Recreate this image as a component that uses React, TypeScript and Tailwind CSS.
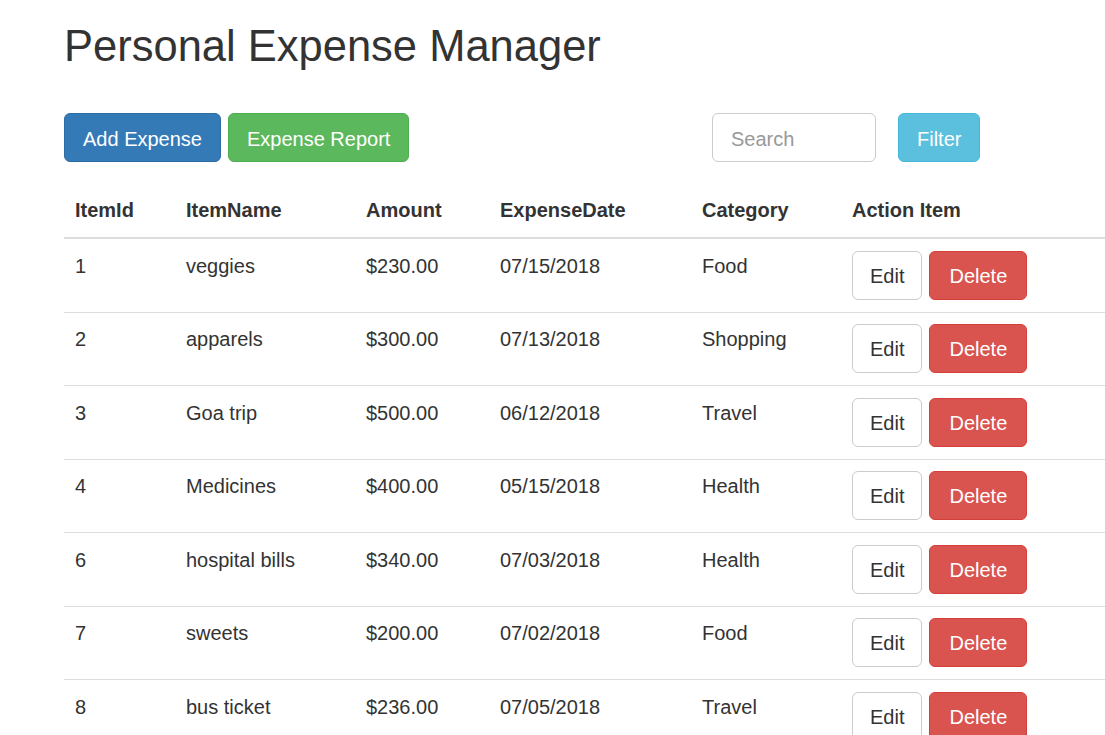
import React from "react";

type Expense = {
  id: number;
  name: string;
  amount: string;
  date: string;
  category: string;
};

const expenses: Expense[] = [
  { id: 1, name: "veggies", amount: "$230.00", date: "07/15/2018", category: "Food" },
  { id: 2, name: "apparels", amount: "$300.00", date: "07/13/2018", category: "Shopping" },
  { id: 3, name: "Goa trip", amount: "$500.00", date: "06/12/2018", category: "Travel" },
  { id: 4, name: "Medicines", amount: "$400.00", date: "05/15/2018", category: "Health" },
  { id: 6, name: "hospital bills", amount: "$340.00", date: "07/03/2018", category: "Health" },
  { id: 7, name: "sweets", amount: "$200.00", date: "07/02/2018", category: "Food" },
  { id: 8, name: "bus ticket", amount: "$236.00", date: "07/05/2018", category: "Travel" },
];

const btn =
  "h-[49px] px-[18px] pt-[3px] rounded-[6px] border text-[20px] leading-[29px] text-white";

const App = () => {
  return (
    <div
      className="w-[1105px] h-[735px] overflow-hidden bg-white text-[#333] pl-[64px]"
      style={{ fontFamily: '"Liberation Sans", Arial, sans-serif' }}
    >
      <h2 className="mt-[23px] text-[43.5px] leading-[47px] font-normal">
        Personal Expense Manager
      </h2>

      <div className="mt-[43px] w-[916px] flex items-center justify-between">
        <div className="flex gap-[7px]">
          <button className={btn + " bg-[#337ab7] border-[#2e6da4]"}>Add Expense</button>
          <button className={btn + " bg-[#5cb85c] border-[#4cae4c]"}>Expense Report</button>
        </div>
        <div className="flex items-center gap-[22px]">
          <input
            type="text"
            placeholder="Search"
            className="w-[164px] h-[49px] px-[18px] pt-[3px] rounded-[6px] border border-[#ccc] text-[20px] placeholder:text-[#999] outline-none"
          />
          <button className={btn + " w-[82px] px-0 bg-[#5bc0de] border-[#46b8da]"}>Filter</button>
        </div>
      </div>

      <table className="mt-[22px] w-full border-collapse text-[20px] leading-[29px]">
        <thead>
          <tr className="border-b-2 border-[#ddd] text-left">
            <th className="w-[111px] px-[11px] py-[12px] font-bold">ItemId</th>
            <th className="w-[180px] px-[11px] py-[12px] font-bold">ItemName</th>
            <th className="w-[134px] px-[11px] py-[12px] font-bold">Amount</th>
            <th className="w-[202px] px-[11px] py-[12px] font-bold">ExpenseDate</th>
            <th className="w-[150px] px-[11px] py-[12px] font-bold">Category</th>
            <th className="px-[11px] py-[12px] font-bold">Action Item</th>
          </tr>
        </thead>
        <tbody>
          {expenses.map((e, i) => (
            <tr key={e.id} className={i === 0 ? "" : "border-t border-[#ddd]"}>
              <td className="align-top px-[11px] pt-[12.75px] pb-[10.75px]">{e.id}</td>
              <td className="align-top px-[11px] pt-[12.75px] pb-[10.75px]">{e.name}</td>
              <td className="align-top px-[11px] pt-[12.75px] pb-[10.75px]">{e.amount}</td>
              <td className="align-top px-[11px] pt-[12.75px] pb-[10.75px]">{e.date}</td>
              <td className="align-top px-[11px] pt-[12.75px] pb-[10.75px]">{e.category}</td>
              <td className="align-top px-[11px] pt-[11.75px] pb-[11.75px]">
                <div className="flex gap-[7px]">
                  <button className="h-[49px] px-[17px] pt-[2px] rounded-[6px] border border-[#ccc] bg-white text-[20px] text-[#333]">
                    Edit
                  </button>
                  <button className="h-[49px] px-[19px] pt-[2px] rounded-[6px] border border-[#d43f3a] bg-[#d9534f] text-[20px] text-white">
                    Delete
                  </button>
                </div>
              </td>
            </tr>
          ))}
        </tbody>
      </table>
    </div>
  );
};

export default App;
